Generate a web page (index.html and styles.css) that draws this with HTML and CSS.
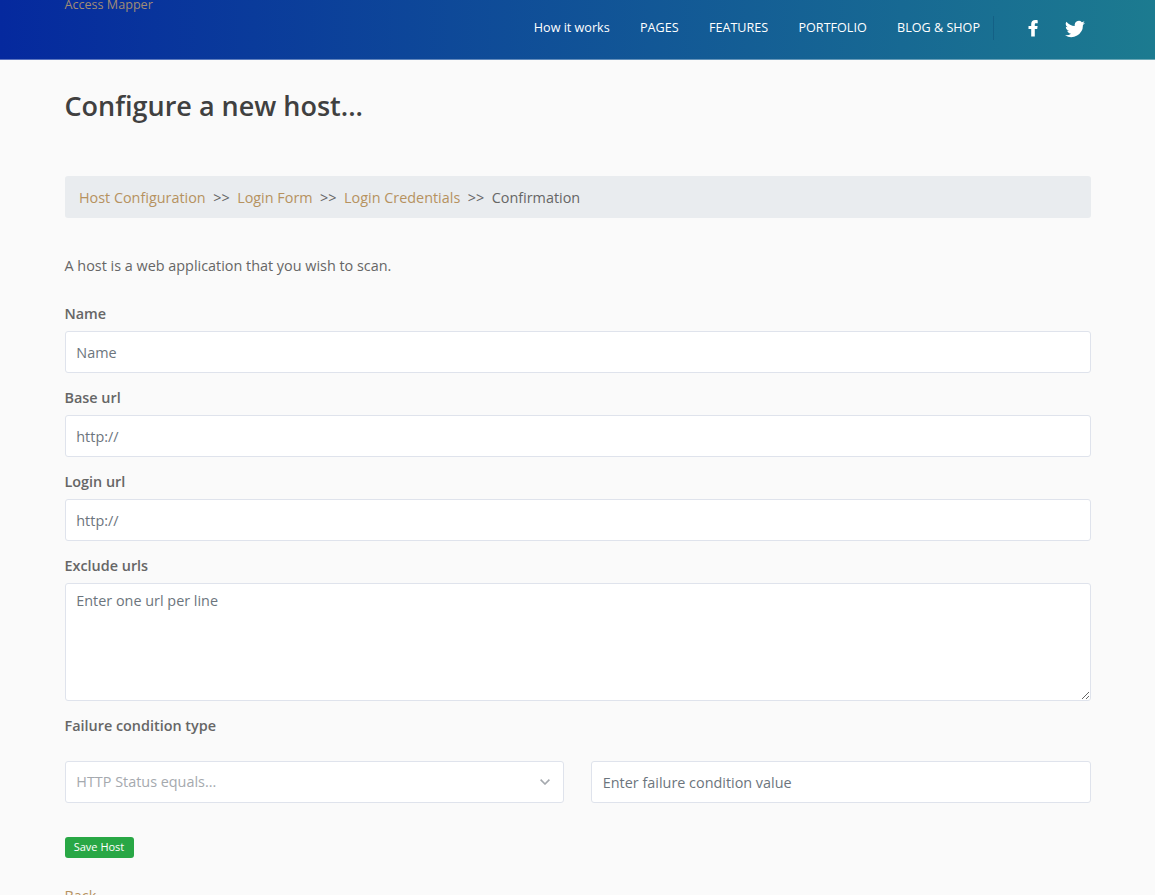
FILE: index.html
```html
<!DOCTYPE html>
<html lang="en">
<head>
<meta charset="utf-8">
<title>Access Mapper</title>
<link rel="stylesheet" href="styles.css">
</head>
<body>
<header class="topbar">
  <a class="brand" href="#">Access Mapper</a>
  <nav class="menu">
    <a href="#">How it works</a>
    <a href="#">PAGES</a>
    <a href="#">FEATURES</a>
    <a href="#">PORTFOLIO</a>
    <a href="#">BLOG &amp; SHOP</a>
  </nav>
  <div class="social">
    <svg class="facebook" viewBox="0 0 10 17"><path d="M9.700.2v3H8C7 3.200 6.800 3.700 6.800 4.400V6.100h2.800L9.200 9H6.800v7.500H3.200V9H.5V6.100h2.700V4C3.200 1.500 4.800 0 7.300 0c1.100 0 2.100.1 2.400.2z"/></svg>
    <svg class="twitter" viewBox="0 0 24 24"><path d="M24 4.600a10 10 0 0 1-2.800.8 5 5 0 0 0 2.100-2.700c-.9.500-2 1-3.100 1.200A4.900 4.900 0 0 0 11.800 8.400 14 14 0 0 1 1.700 3.200a4.900 4.900 0 0 0 1.500 6.600 4.900 4.900 0 0 1-2.200-.6 4.900 4.900 0 0 0 3.900 4.900c-.7.200-1.500.2-2.200.1a4.900 4.900 0 0 0 4.600 3.400A9.900 9.900 0 0 1 0 19.500 14 14 0 0 0 21.500 7.100 10 10 0 0 0 24 4.600z"/></svg>
  </div>
</header>
<main class="page">
  <h1 class="title">Configure a new host...</h1>
  <nav class="steps">
    <a href="#">Host Configuration</a><span class="sep">&gt;&gt;</span><a href="#">Login Form</a><span class="sep">&gt;&gt;</span><a href="#">Login Credentials</a><span class="sep">&gt;&gt;</span><span>Confirmation</span>
  </nav>
  <p class="intro">A host is a web application that you wish to scan.</p>
  <form class="form">
    <label class="label" for="name">Name</label>
    <input class="control" id="name" type="text" placeholder="Name">
    <label class="label" for="base">Base url</label>
    <input class="control" id="base" type="text" placeholder="http://">
    <label class="label" for="login">Login url</label>
    <input class="control" id="login" type="text" placeholder="http://">
    <label class="label" for="exclude">Exclude urls</label>
    <textarea class="control area" id="exclude" placeholder="Enter one url per line"></textarea>
    <label class="label" for="condition">Failure condition type</label>
    <div class="row">
      <div class="control select" id="condition"><span>HTTP Status equals...</span><svg class="chevron" viewBox="0 0 10 6"><path d="M.6 .6L5 5 9.400 .6"/></svg></div>
      <input class="control" type="text" placeholder="Enter failure condition value">
    </div>
    <button class="save" type="button">Save Host</button>
  </form>
  <a class="back" href="#">Back</a>
</main>
</body>
</html>
```
FILE: styles.css
```css
* { box-sizing: border-box; }

body {
  margin: 0;
  height: 895px;
  overflow: hidden;
  background: #fafafa;
  color: #666;
  font-family: "Open Sans", sans-serif;
  font-size: 14.4px;
  line-height: 22px;
}

a { color: #b6925f; text-decoration: none; }

.topbar {
  display: flex;
  height: 60px;
  padding: 0 70px 0 64.5px;
  border-bottom: 1px solid rgba(255, 255, 255, .35);
  background: linear-gradient(90deg, #05299e, #1c7b90) border-box;
  font-size: 13px;
}

.brand { margin-top: -6px; color: #a18c75; font-size: 12.6px; }

.menu {
  display: flex;
  gap: 30.3px;
  height: 24px;
  margin: 16px 0 0 auto;
  padding-right: 13px;
  border-right: 1px solid rgba(0, 40, 90, .2);
}

.menu a { color: #fff; font-size: 12.6px; line-height: 24px; }

.social { display: flex; margin-left: 34px; padding-top: 20px; }
.social svg { fill: #fff; }
.facebook { width: 10px; height: 17px; }
.twitter { width: 20px; height: 20px; margin: -1px 0 0 27px; }

.page { padding: 0 64.5px; }

.title {
  margin: 28px 0 0;
  color: #404040;
  font-size: 27px;
  font-weight: 600;
  line-height: 36px;
}

.steps {
  display: flex;
  height: 42px;
  margin-top: 52px;
  padding: 0 14.4px;
  border-radius: 3px;
  background: #e9ecef;
  line-height: 43px;
}

.sep { margin: 0 7.500px; }

.intro { margin: 37px 0 0; }

.form { display: block; margin-top: 26px; }

.label { display: block; height: 28px; font-weight: 600; line-height: 22px; }

.control {
  display: block;
  width: 100%;
  height: 42px;
  margin-bottom: 14px;
  padding: 0 10.800px;
  border: 1px solid #dfe3ec;
  border-radius: 3px;
  outline: 0;
  background: #fff;
  color: #606060;
  font: inherit;
}

.control::placeholder { color: #6c757d; opacity: 1; }

.area { height: 118px; padding-top: 6px; resize: vertical; }

.row { display: grid; grid-template-columns: 1fr 1fr; gap: 27px; margin-top: 18px; }
.row .control { margin: 0; }

.select {
  display: flex;
  align-items: center;
  justify-content: space-between;
  padding: 0 12.800px 0 10.800px;
  color: #a5a9ae;
}

.chevron {
  width: 10px;
  height: 6px;
  fill: none;
  stroke: #a5a9ae;
  stroke-width: 1.6;
}

.save {
  display: block;
  width: 69px;
  height: 21px;
  margin-top: 34px;
  padding: 0 0 2px;
  border: 0;
  border-radius: 3px;
  background: #28a745;
  color: #fff;
  font: 11px/18px "Open Sans", sans-serif;
}

.back { display: block; margin-top: 27px; }
```
